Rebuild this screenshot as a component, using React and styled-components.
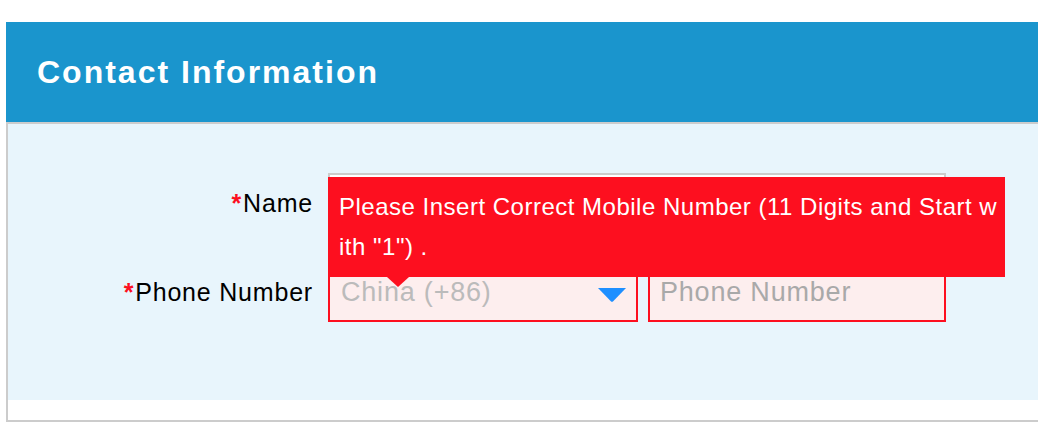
import React from "react";
import styled, { createGlobalStyle } from "styled-components";

const Global = createGlobalStyle`
  html, body { margin: 0; padding: 0; background: #ffffff; }
  body { font-family: "Liberation Sans", Arial, sans-serif; }
  * { box-sizing: border-box; }
`;

const Page = styled.div`
  padding: 22px 0 18px 6px;
`;

const Card = styled.section`
  border-left: 2px solid #cccccc;
  border-bottom: 2px solid #cccccc;
  background: #ffffff;
`;

const Header = styled.header`
  height: 102px;
  margin-left: -2px;
  background: #1a95cd;
  display: flex;
  align-items: center;
  padding-left: 31px;
  border-bottom: 2px solid #cccccc;
`;

const Title = styled.h2`
  margin: 0;
  color: #ffffff;
  font-size: 32px;
  font-weight: 700;
  letter-spacing: 2px;
  line-height: 1;
`;

const Body = styled.div`
  background: #e8f5fc;
  height: 276px;
  padding-top: 49px;
  display: grid;
  grid-template-columns: 305px 618px;
  grid-auto-rows: 60px;
  column-gap: 15px;
  row-gap: 29px;
  align-content: start;
`;

const Footer = styled.div`
  height: 20px;
`;

const Label = styled.label`
  display: flex;
  align-items: center;
  justify-content: flex-end;
  font-size: 25px;
  letter-spacing: 0.8px;
  color: #000000;
  white-space: nowrap;
`;

const Star = styled.span`
  color: #fd0f1f;
  font-weight: 700;
  margin-right: 1px;
`;

const Field = styled.div`
  position: relative;
  display: flex;
  gap: 10px;
`;

const TextBox = styled.input`
  width: ${(p) => p.$width || "100%"};
  height: 60px;
  margin: 0;
  padding: 0 10px;
  border: 2px solid ${(p) => (p.$error ? "#fd0f1f" : "#cccccc")};
  background: ${(p) => (p.$error ? "#fdeeee" : "#ffffff")};
  font-family: "Liberation Sans", Arial, sans-serif;
  font-size: 27px;
  letter-spacing: 0.8px;
  color: #333333;
  outline: none;
  &::placeholder { color: #a9a9a9; }
`;

const SelectBox = styled.div`
  width: ${(p) => p.$width};
  height: 60px;
  border: 2px solid #fd0f1f;
  background: #fdeeee;
  display: flex;
  align-items: center;
  justify-content: space-between;
  padding: 0 10px 0 11px;
  font-size: 27px;
  letter-spacing: 0.8px;
  color: #bbbbbb;
  svg { margin-top: 6px; }
`;

const Tooltip = styled.div`
  position: absolute;
  top: 4px;
  left: 0;
  width: 677px;
  height: 100px;
  padding: 10px 11px;
  background: #fd0f1f;
  color: #ffffff;
  font-size: 24px;
  letter-spacing: 0.5px;
  line-height: 40px;
  white-space: nowrap;
  z-index: 5;
  &::after {
    content: "";
    position: absolute;
    left: 59px;
    top: 100px;
    border-left: 11px solid transparent;
    border-right: 11px solid transparent;
    border-top: 10px solid #fd0f1f;
  }
`;

const Caret = () => (
  <svg width="28" height="14" viewBox="0 0 28 14">
    <path d="M0 0 H28 L15.2 13.2 Q14 14.3 12.8 13.2 Z" fill="#1e8fff" />
  </svg>
);

export default function App() {
  return (
    <>
      <Global />
      <Page>
        <Card>
          <Header>
            <Title>Contact Information</Title>
          </Header>
          <Body>
            <Label>
              <Star>*</Star>Name
            </Label>
            <Field>
              <TextBox type="text" />
              <Tooltip>
                Please Insert Correct Mobile Number (11 Digits and Start w
                <br />
                ith "1") .
              </Tooltip>
            </Field>
            <Label>
              <Star>*</Star>Phone Number
            </Label>
            <Field>
              <SelectBox $width="310px">
                <span>China (+86)</span>
                <Caret />
              </SelectBox>
              <TextBox $error $width="298px" type="text" placeholder="Phone Number" />
            </Field>
          </Body>
          <Footer />
        </Card>
      </Page>
    </>
  );
}
